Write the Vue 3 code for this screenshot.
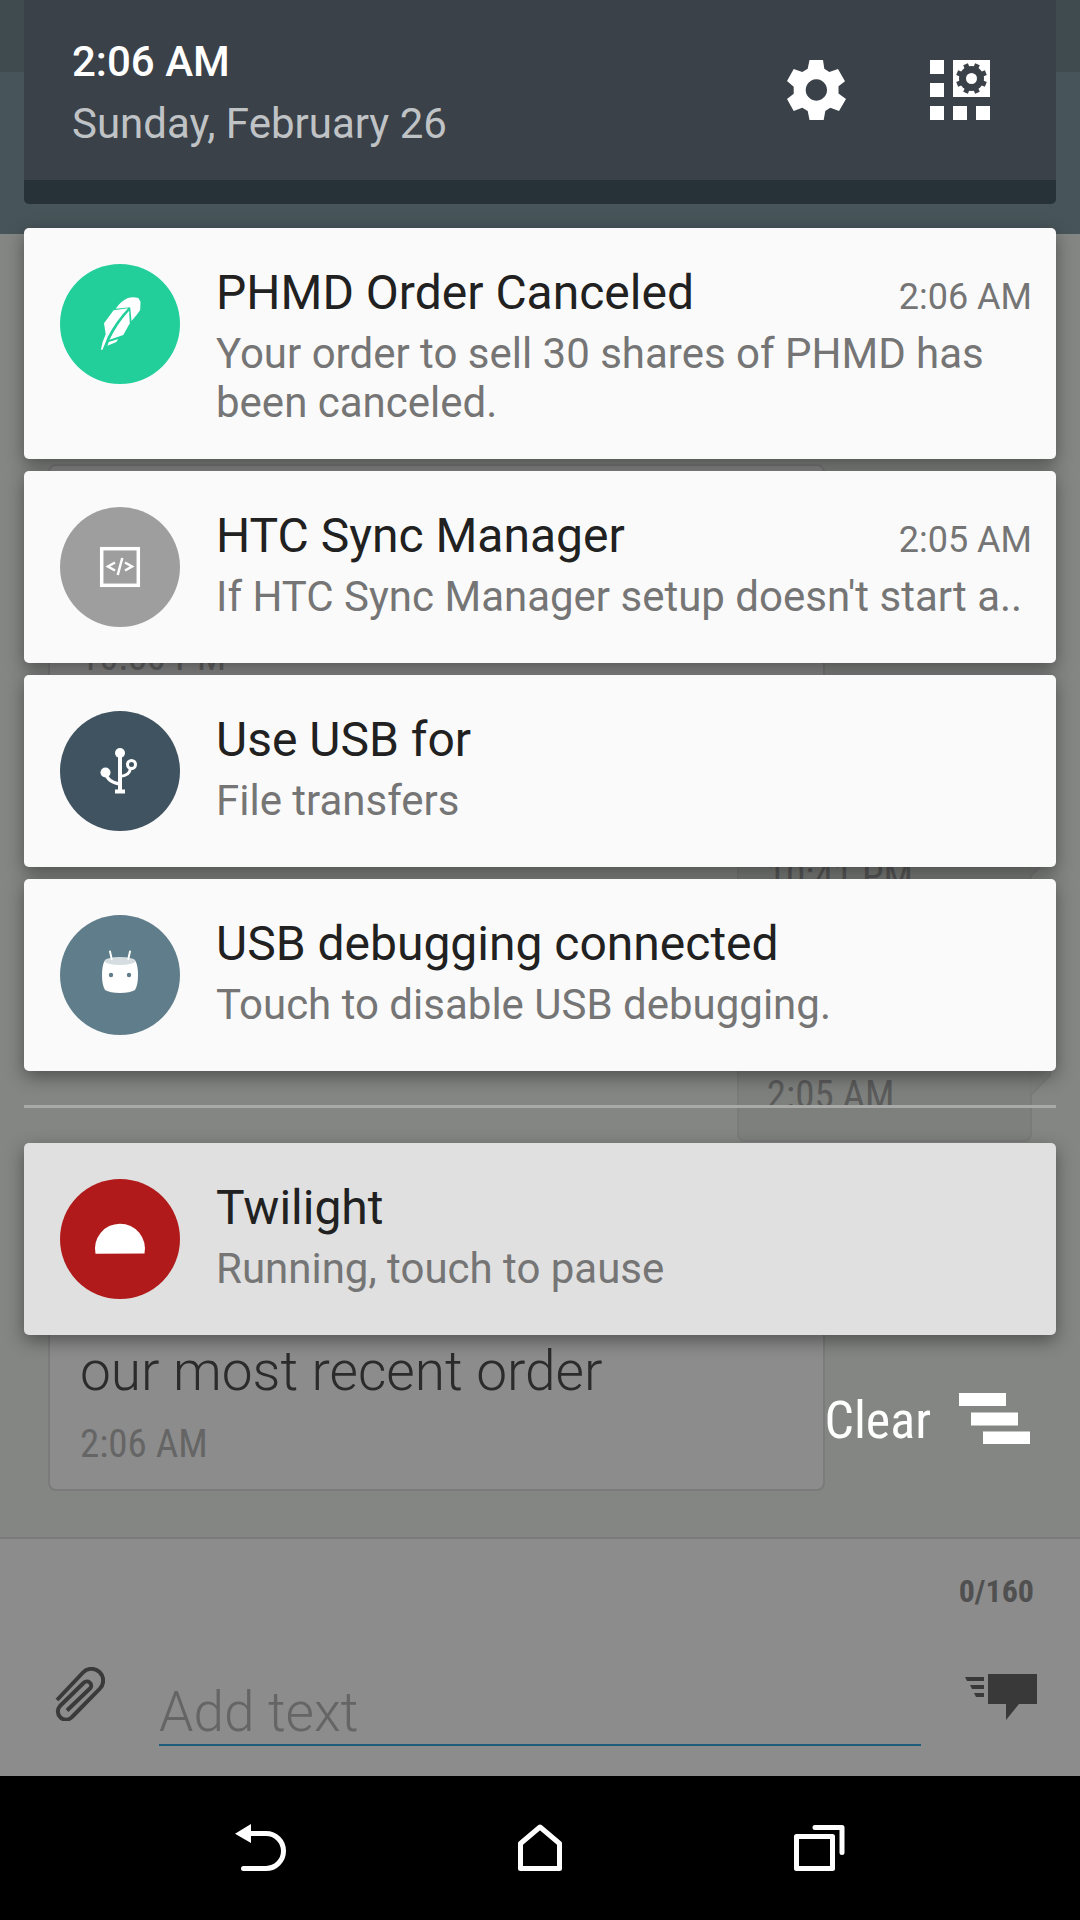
<script setup>
const notifications = [
  {
    id: 'order',
    title: 'PHMD Order Canceled',
    body: 'Your order to sell 30 shares of PHMD has been canceled.',
    time: '2:06 AM',
    wrap: true,
  },
  {
    id: 'sync',
    title: 'HTC Sync Manager',
    body: "If HTC Sync Manager setup doesn't start a..",
    time: '2:05 AM',
  },
  { id: 'usb', title: 'Use USB for', body: 'File transfers' },
  { id: 'debug', title: 'USB debugging connected', body: 'Touch to disable USB debugging.' },
  { id: 'twilight', title: 'Twilight', body: 'Running, touch to pause', ongoing: true },
]
</script>

<template>
  <div class="screen">
    <div class="stage">
      <!-- Messaging app behind the shade -->
      <div class="app">
        <div class="app-status"></div>
        <div class="app-bar"></div>
        <div class="thread">
          <div class="bubble received">
            <time>10:50 PM</time>
          </div>
          <div class="bubble sent">
            <time>10:41 PM</time>
            <svg class="tail" viewBox="0 0 22 42"><path d="M0 1H14Q20 1 20 8V21L1 41" /></svg>
          </div>
          <div class="bubble sent">
            <time>2:05 AM</time>
            <svg class="tail" viewBox="0 0 22 42"><path d="M0 1H14Q20 1 20 8V21L1 41" /></svg>
          </div>
          <div class="bubble received latest">
            <p>our most recent order</p>
            <time>2:06 AM</time>
          </div>
        </div>
        <form class="composer" @submit.prevent>
          <output class="counter">0/160</output>
          <div class="entry">
            <button class="attach" type="button" aria-label="Attach">
              <svg width="50" height="54" viewBox="0 0 50 54">
                <path d="M2 33 28 5.500A11.500 11.500 0 0 1 45 21.500L17 50A7.600 7.600 0 0 1 5 39L29 15.500A4.300 4.300 0 0 1 35.500 21L12 43.500" />
              </svg>
            </button>
            <input class="field" type="text" placeholder="Add text" aria-label="Add text" />
            <button class="send" type="submit" aria-label="Send">
              <svg width="72" height="46" viewBox="0 0 72 46">
                <path d="M23 0H72V30H54L41 46V30H23ZM0 3H19V7H2ZM5 11H19V15H7ZM9 19H19V23H11Z" />
              </svg>
            </button>
          </div>
        </form>
      </div>

      <!-- Notification shade -->
      <div class="shade">
        <header class="header">
          <div class="clock">
            <strong>2:06 AM</strong>
            <span>Sunday, February 26</span>
          </div>
          <button class="header-button" type="button" aria-label="Settings">
            <svg width="60" height="60" viewBox="0 0 60 60">
              <path
                fill-rule="evenodd"
                d="M23.500 0H37L38.300 8.700 43.300 12 52 9 59 21.300 52.500 26.300V33.500L60 39 53 51 44.300 47.700 39.300 51 37.700 60H23.500L21.700 51 16.300 47.700 7.700 51 1 39 7.700 33.700V26.700L1 21 7.700 9 16.300 12 21.700 8.700ZM30.300 19.300A10.700 10.700 0 1 0 30.400 19.300Z"
              />
            </svg>
          </button>
          <button class="header-button" type="button" aria-label="Quick settings">
            <svg width="60" height="60" viewBox="0 0 60 60">
              <path d="M0 0H14V14H0ZM0 23H14V37H0ZM0 46H14V60H0ZM23 46H37V60H23ZM46 46H60V60H46ZM23 0H60V37H23Z" />
              <g class="cut">
                <circle cx="41.500" cy="18.500" r="12.500" />
                <rect
                  v-for="angle in [22.5, 67.5, 112.5, 157.5]"
                  :key="angle"
                  x="39"
                  y="3"
                  width="5"
                  height="31"
                  :transform="`rotate(${angle} 41.5 18.5)`"
                />
              </g>
              <circle cx="41.500" cy="18.500" r="5.500" />
            </svg>
          </button>
        </header>

        <ul class="cards">
          <li v-for="n in notifications" :key="n.id" :class="{ ongoing: n.ongoing }">
            <hr v-if="n.ongoing" />
            <article class="card">
              <svg class="badge" :class="n.id" viewBox="0 0 120 120">
                <g v-if="n.id === 'order'" fill="#fff">
                  <path d="M55.700 44.700Q61 37 67.400 34.300Q72 32.600 78.400 34L80.500 37.700L80.200 46Q77 51 71.500 57L70.200 43.300Z" />
                  <path d="M53.600 46.300L68.100 44.300Q56 57 47.600 73Q45 80 42.500 85.700H40.900Q42 78 45.700 70.300L44 59.300Z" />
                  <path d="M69.100 46.700L69.800 59.300L63.300 71L49.500 75.700Q57 60 69.100 46.700Z" />
                  <path d="M48.800 78L58.100 75L56.400 78L47.400 81.700Z" />
                </g>
                <g v-else-if="n.id === 'sync'" fill="none" stroke="#fff">
                  <rect x="41.700" y="41.700" width="36.600" height="36.600" stroke-width="3.500" />
                  <path d="M55 55.500 48 59.500 55 63.500M65 55.500 72 59.500 65 63.500M62.300 51 57.700 68" stroke-width="2.500" />
                </g>
                <g v-else-if="n.id === 'usb'" fill="none" stroke="#fff" stroke-width="3">
                  <path d="M60 42V80" stroke-width="4" />
                  <path d="M55 80.500H65" stroke-width="4" />
                  <path d="M46 62Q47 71 60 73M60 65.500Q70 64.500 70.500 57" />
                  <circle cx="71.500" cy="53.500" r="4" />
                  <g fill="#fff" stroke="none">
                    <circle cx="60" cy="42" r="5" />
                    <circle cx="45.500" cy="61.500" r="5" />
                  </g>
                </g>
                <g v-else-if="n.id === 'debug'">
                  <path d="M44.500 46H75.500Q78 51 78 60Q78 70 75 75Q70 78 60 78Q50 78 45 75Q42 70 42 60Q42 51 44.500 46Z" fill="#fff" />
                  <ellipse cx="60" cy="46" rx="15.500" ry="4" fill="#d5dde0" />
                  <path d="M50 36.500 51.700 44M70 36.500 68.300 44" stroke="#fff" stroke-width="2" stroke-linecap="round" />
                  <circle cx="51" cy="60" r="2.200" fill="#607d8b" />
                  <circle cx="69" cy="60" r="2.200" fill="#607d8b" />
                </g>
                <path v-else d="M35.500 74.700A25 25 0 1 1 84.500 74.500Z" fill="#fff" />
              </svg>
              <div class="text">
                <div class="title-row">
                  <h2>{{ n.title }}</h2>
                  <time v-if="n.time">{{ n.time }}</time>
                </div>
                <p :class="{ wrap: n.wrap }">{{ n.body }}</p>
              </div>
            </article>
          </li>
        </ul>

        <button class="clear" type="button">
          <span>Clear</span>
          <svg width="72" height="52" viewBox="0 0 72 52">
            <path d="M0 0H47V13H0ZM12 19.500H59V32.500H12ZM24 38.500H71V51H24Z" />
          </svg>
        </button>
      </div>
    </div>

    <nav class="nav">
      <button type="button" aria-label="Back">
        <svg width="52" height="48" viewBox="-1 0 52 48">
          <path d="M0 9.700 16 0V19Z" fill="#fff" stroke="none" />
          <path d="M14 9.500H31A17.500 17.500 0 0 1 31 44.500H8.500" />
        </svg>
      </button>
      <button type="button" aria-label="Home">
        <svg width="44" height="48" viewBox="0 0 44 48">
          <path d="M2.500 44.500V19.500L22 3 41.500 19.500V44.500Z" />
        </svg>
      </button>
      <button type="button" aria-label="Recent apps">
        <svg width="52" height="48" viewBox="0 0 52 48">
          <path d="M2.500 12.500H38.500V44.500H2.500ZM21 3.500H48V28.500" />
        </svg>
      </button>
    </nav>
  </div>
</template>

<style>
body {
  margin: 0;
  background: #000;
}
</style>

<style scoped>
* {
  box-sizing: border-box;
}

.screen {
  display: flex;
  flex-direction: column;
  min-height: 100vh;
  font-family: Roboto, "Noto Sans", sans-serif;
}

button {
  display: flex;
  align-items: center;
  justify-content: center;
  padding: 0;
  border: 0;
  background: none;
  color: inherit;
  font: inherit;
}

h2,
p,
ul {
  margin: 0;
  padding: 0;
  font-weight: 400;
  list-style: none;
}

/* The app and the shade share one grid cell */
.stage {
  flex: 1;
  display: grid;
  grid-template-columns: minmax(0, 1fr);
}

.app,
.shade {
  grid-area: 1 / 1;
  display: flex;
  flex-direction: column;
}

.app {
  background: #848684;
}

.app-status {
  height: 72px;
  background: #404b50;
}

.app-bar {
  height: 162px;
  background: #475459;
}

.thread {
  flex: 1;
  display: flex;
  flex-direction: column;
  justify-content: flex-end;
  gap: 17px;
  padding: 0 48px 46px;
}

.bubble {
  display: flex;
  flex-direction: column;
  justify-content: flex-end;
  min-height: 202px;
  padding: 22px 30px;
  border: 2px solid #7a7b7a;
  border-radius: 8px;
  color: #656565;
  font-family: "Roboto Condensed", Roboto, sans-serif;
  font-size: 39px;
  line-height: 46px;
}

.received {
  align-self: flex-start;
  width: 79%;
  min-height: 240px;
  background: #8c8c8c;
}

.sent {
  position: relative;
  align-self: flex-end;
  width: 30%;
  padding-left: 28px;
  color: #5a5b5a;
  background: #7e807e;
}

.tail {
  position: absolute;
  right: -22px;
  bottom: 44px;
  width: 22px;
  height: 42px;
  fill: #7e807e;
  stroke: #7a7b7a;
  stroke-width: 2;
}

.latest {
  min-height: 332px;
}

.latest p {
  margin-bottom: 18px;
  color: #2b2b2b;
  font-family: Roboto, sans-serif;
  font-size: 55px;
  font-weight: 300;
  line-height: 64px;
}

.composer {
  height: 239px;
  padding: 32px 43px 30px 55px;
  border-top: 2px solid #7a7b7a;
  background: #8c8c8c;
  display: flex;
  flex-direction: column;
  justify-content: space-between;
}

.counter {
  align-self: flex-end;
  padding-right: 3px;
  color: #505050;
  font-family: "Roboto Condensed", Roboto, sans-serif;
  font-size: 32px;
  font-weight: 700;
  line-height: 40px;
}

.entry {
  display: flex;
  align-items: flex-start;
}

.attach {
  margin-right: 54px;
}

.attach svg {
  fill: none;
  stroke: #3a3a3a;
  stroke-width: 4;
}

.field {
  flex: 1;
  min-width: 0;
  height: 79px;
  padding: 12px 0 0;
  border: 0;
  border-bottom: 2px solid #205d7d;
  border-radius: 0;
  background: none;
  outline: none;
  color: #2b2b2b;
  font-family: Roboto, sans-serif;
  font-size: 55px;
  font-weight: 300;
}

.field::placeholder {
  color: #656565;
  opacity: 1;
}

.send {
  margin: 7px 0 0 44px;
}

.send svg {
  fill: #393939;
}

.shade {
  z-index: 1;
  padding: 0 24px;
}

.header {
  display: flex;
  align-items: center;
  height: 204px;
  padding: 0 24px 0 48px;
  border-bottom: 24px solid #263238;
  border-radius: 0 0 5px 5px;
  background: #3a4148;
}

.clock {
  flex: 1;
  display: flex;
  flex-direction: column;
  gap: 13px;
  padding-top: 4px;
  color: #c0c3c6;
  font-size: 42px;
  line-height: 49px;
}

.clock strong {
  color: #fff;
  font-weight: 500;
}

.header-button {
  width: 144px;
  height: 144px;
}

.header-button svg {
  fill: #fff;
}

.cut {
  fill: #3a4148;
}

.cards {
  display: flex;
  flex-direction: column;
  gap: 12px;
  margin-top: 24px;
}

.card {
  display: flex;
  gap: 36px;
  min-height: 192px;
  padding: 36px 24px 32px 36px;
  border-radius: 5px;
  background: #fafafa;
  box-shadow: 0 6px 18px rgba(0, 0, 0, 0.4);
}

.ongoing .card {
  background: #e0e0e0;
}

hr {
  height: 3px;
  margin: 22px 0 35px;
  border: 0;
  background: #a9a9a9;
}

.badge {
  flex: none;
  width: 120px;
  height: 120px;
  border-radius: 50%;
}

.order {
  background: #22cf9b;
}

.sync {
  background: #9e9e9e;
}

.usb {
  background: #405360;
}

.debug {
  background: #607d8b;
}

.twilight {
  background: #b01a1a;
}

.text {
  flex: 1;
  min-width: 0;
}

.title-row {
  display: flex;
  align-items: baseline;
  justify-content: space-between;
}

h2 {
  color: #212121;
  font-size: 48px;
  line-height: 58px;
}

.card time {
  color: #757575;
  font-size: 36px;
  line-height: 42px;
}

.card p {
  margin-top: 7px;
  color: #757575;
  font-size: 42px;
  line-height: 49px;
  white-space: nowrap;
}

.card p.wrap {
  white-space: normal;
}

.clear {
  align-self: flex-end;
  gap: 28px;
  height: 72px;
  margin: 48px 25px 0 0;
  color: #fff;
  font-family: "Roboto Condensed", Roboto, sans-serif;
  font-size: 52px;
  line-height: 64px;
}

.clear span {
  padding-top: 4px;
}

.clear svg {
  fill: #fff;
}

.nav {
  display: flex;
  height: 144px;
  padding: 0 120px;
  background: #000;
}

.nav button {
  flex: 1;
}

.nav svg {
  fill: none;
  stroke: #fff;
  stroke-width: 5;
  stroke-linecap: round;
  stroke-linejoin: round;
}
</style>
